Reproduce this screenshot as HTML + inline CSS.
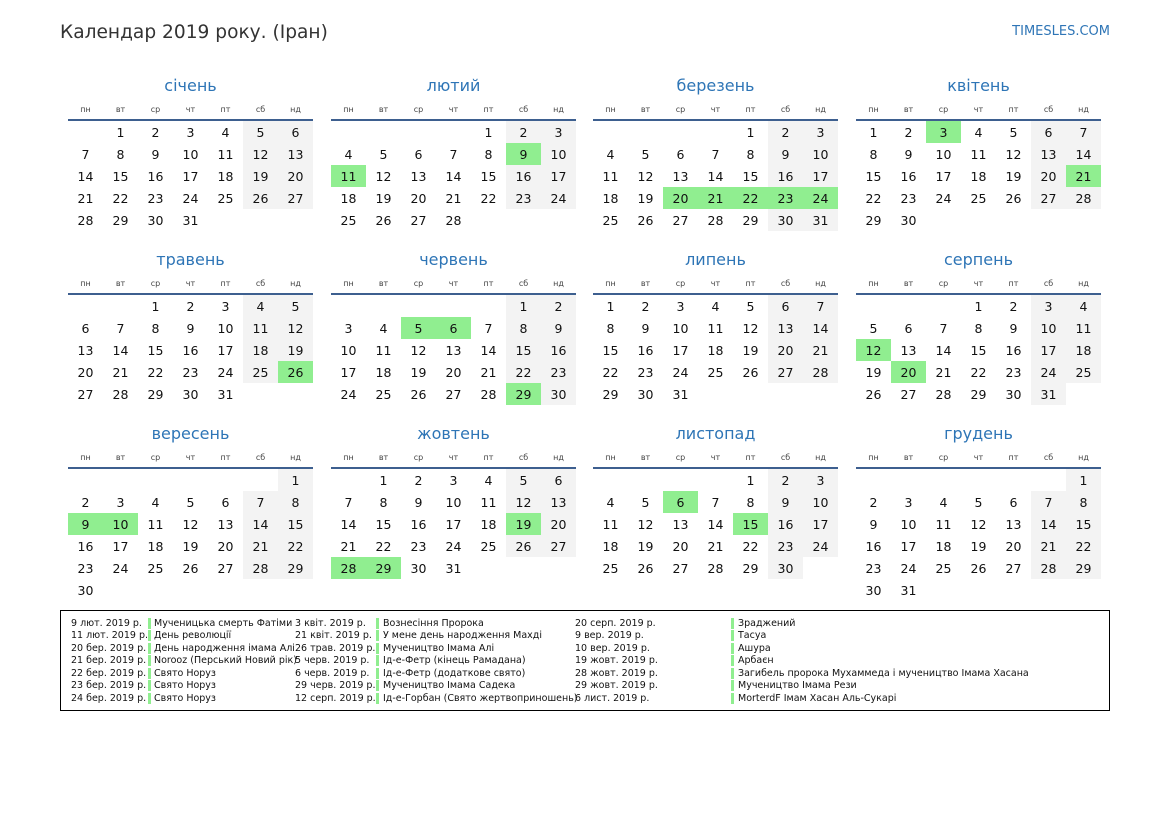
<!DOCTYPE html><html><head><meta charset="utf-8"><style>
body{margin:0;width:1169px;height:827px;background:#fff;font-family:"DejaVu Sans","Liberation Sans",sans-serif;position:relative;overflow:hidden}
.t{position:absolute;left:60px;top:22px;font-size:18.6px;color:#333}
.s{position:absolute;right:59px;top:24px;font-size:13px;color:#2e75b6}
.m{position:absolute;width:245px}
.m h2{margin:0;height:26px;line-height:26px;text-align:center;font-weight:normal;font-size:16px;color:#2e75b6}
table{border-collapse:collapse;width:245px;table-layout:fixed}
th{font-weight:normal;font-size:8px;color:#444;height:20px;border-bottom:2px solid #3d5f8f;padding:0}
td{height:22px;padding:0;text-align:center;font-size:12.5px;color:#111}
td.w{background:#f3f3f3}td.h{background:#90ee90}
.lg{position:absolute;left:60px;top:610px;width:1048px;height:99px;border:1px solid #000}
.c{position:absolute;top:7px;font-size:9.5px;line-height:12.45px;color:#111;white-space:nowrap}
.b{position:absolute;top:7px;width:3px}
.b div{height:11px;margin-bottom:1.45px;background:#90ee90}
</style></head><body>
<div class="t">Календар 2019 року. (Іран)</div><div class="s">TIMESLES.COM</div>

<div class="m" style="left:68px;top:73px"><h2>січень</h2><table><tr><th>пн</th><th>вт</th><th>ср</th><th>чт</th><th>пт</th><th>сб</th><th>нд</th></tr>
<tr><td></td><td>1</td><td>2</td><td>3</td><td>4</td><td class="w">5</td><td class="w">6</td></tr>
<tr><td>7</td><td>8</td><td>9</td><td>10</td><td>11</td><td class="w">12</td><td class="w">13</td></tr>
<tr><td>14</td><td>15</td><td>16</td><td>17</td><td>18</td><td class="w">19</td><td class="w">20</td></tr>
<tr><td>21</td><td>22</td><td>23</td><td>24</td><td>25</td><td class="w">26</td><td class="w">27</td></tr>
<tr><td>28</td><td>29</td><td>30</td><td>31</td><td></td><td></td><td></td></tr></table></div>

<div class="m" style="left:331px;top:73px"><h2>лютий</h2><table><tr><th>пн</th><th>вт</th><th>ср</th><th>чт</th><th>пт</th><th>сб</th><th>нд</th></tr>
<tr><td></td><td></td><td></td><td></td><td>1</td><td class="w">2</td><td class="w">3</td></tr>
<tr><td>4</td><td>5</td><td>6</td><td>7</td><td>8</td><td class="h">9</td><td class="w">10</td></tr>
<tr><td class="h">11</td><td>12</td><td>13</td><td>14</td><td>15</td><td class="w">16</td><td class="w">17</td></tr>
<tr><td>18</td><td>19</td><td>20</td><td>21</td><td>22</td><td class="w">23</td><td class="w">24</td></tr>
<tr><td>25</td><td>26</td><td>27</td><td>28</td><td></td><td></td><td></td></tr></table></div>

<div class="m" style="left:593px;top:73px"><h2>березень</h2><table><tr><th>пн</th><th>вт</th><th>ср</th><th>чт</th><th>пт</th><th>сб</th><th>нд</th></tr>
<tr><td></td><td></td><td></td><td></td><td>1</td><td class="w">2</td><td class="w">3</td></tr>
<tr><td>4</td><td>5</td><td>6</td><td>7</td><td>8</td><td class="w">9</td><td class="w">10</td></tr>
<tr><td>11</td><td>12</td><td>13</td><td>14</td><td>15</td><td class="w">16</td><td class="w">17</td></tr>
<tr><td>18</td><td>19</td><td class="h">20</td><td class="h">21</td><td class="h">22</td><td class="h">23</td><td class="h">24</td></tr>
<tr><td>25</td><td>26</td><td>27</td><td>28</td><td>29</td><td class="w">30</td><td class="w">31</td></tr></table></div>

<div class="m" style="left:856px;top:73px"><h2>квітень</h2><table><tr><th>пн</th><th>вт</th><th>ср</th><th>чт</th><th>пт</th><th>сб</th><th>нд</th></tr>
<tr><td>1</td><td>2</td><td class="h">3</td><td>4</td><td>5</td><td class="w">6</td><td class="w">7</td></tr>
<tr><td>8</td><td>9</td><td>10</td><td>11</td><td>12</td><td class="w">13</td><td class="w">14</td></tr>
<tr><td>15</td><td>16</td><td>17</td><td>18</td><td>19</td><td class="w">20</td><td class="h">21</td></tr>
<tr><td>22</td><td>23</td><td>24</td><td>25</td><td>26</td><td class="w">27</td><td class="w">28</td></tr>
<tr><td>29</td><td>30</td><td></td><td></td><td></td><td></td><td></td></tr></table></div>

<div class="m" style="left:68px;top:247px"><h2>травень</h2><table><tr><th>пн</th><th>вт</th><th>ср</th><th>чт</th><th>пт</th><th>сб</th><th>нд</th></tr>
<tr><td></td><td></td><td>1</td><td>2</td><td>3</td><td class="w">4</td><td class="w">5</td></tr>
<tr><td>6</td><td>7</td><td>8</td><td>9</td><td>10</td><td class="w">11</td><td class="w">12</td></tr>
<tr><td>13</td><td>14</td><td>15</td><td>16</td><td>17</td><td class="w">18</td><td class="w">19</td></tr>
<tr><td>20</td><td>21</td><td>22</td><td>23</td><td>24</td><td class="w">25</td><td class="h">26</td></tr>
<tr><td>27</td><td>28</td><td>29</td><td>30</td><td>31</td><td></td><td></td></tr></table></div>

<div class="m" style="left:331px;top:247px"><h2>червень</h2><table><tr><th>пн</th><th>вт</th><th>ср</th><th>чт</th><th>пт</th><th>сб</th><th>нд</th></tr>
<tr><td></td><td></td><td></td><td></td><td></td><td class="w">1</td><td class="w">2</td></tr>
<tr><td>3</td><td>4</td><td class="h">5</td><td class="h">6</td><td>7</td><td class="w">8</td><td class="w">9</td></tr>
<tr><td>10</td><td>11</td><td>12</td><td>13</td><td>14</td><td class="w">15</td><td class="w">16</td></tr>
<tr><td>17</td><td>18</td><td>19</td><td>20</td><td>21</td><td class="w">22</td><td class="w">23</td></tr>
<tr><td>24</td><td>25</td><td>26</td><td>27</td><td>28</td><td class="h">29</td><td class="w">30</td></tr></table></div>

<div class="m" style="left:593px;top:247px"><h2>липень</h2><table><tr><th>пн</th><th>вт</th><th>ср</th><th>чт</th><th>пт</th><th>сб</th><th>нд</th></tr>
<tr><td>1</td><td>2</td><td>3</td><td>4</td><td>5</td><td class="w">6</td><td class="w">7</td></tr>
<tr><td>8</td><td>9</td><td>10</td><td>11</td><td>12</td><td class="w">13</td><td class="w">14</td></tr>
<tr><td>15</td><td>16</td><td>17</td><td>18</td><td>19</td><td class="w">20</td><td class="w">21</td></tr>
<tr><td>22</td><td>23</td><td>24</td><td>25</td><td>26</td><td class="w">27</td><td class="w">28</td></tr>
<tr><td>29</td><td>30</td><td>31</td><td></td><td></td><td></td><td></td></tr></table></div>

<div class="m" style="left:856px;top:247px"><h2>серпень</h2><table><tr><th>пн</th><th>вт</th><th>ср</th><th>чт</th><th>пт</th><th>сб</th><th>нд</th></tr>
<tr><td></td><td></td><td></td><td>1</td><td>2</td><td class="w">3</td><td class="w">4</td></tr>
<tr><td>5</td><td>6</td><td>7</td><td>8</td><td>9</td><td class="w">10</td><td class="w">11</td></tr>
<tr><td class="h">12</td><td>13</td><td>14</td><td>15</td><td>16</td><td class="w">17</td><td class="w">18</td></tr>
<tr><td>19</td><td class="h">20</td><td>21</td><td>22</td><td>23</td><td class="w">24</td><td class="w">25</td></tr>
<tr><td>26</td><td>27</td><td>28</td><td>29</td><td>30</td><td class="w">31</td><td></td></tr></table></div>

<div class="m" style="left:68px;top:421px"><h2>вересень</h2><table><tr><th>пн</th><th>вт</th><th>ср</th><th>чт</th><th>пт</th><th>сб</th><th>нд</th></tr>
<tr><td></td><td></td><td></td><td></td><td></td><td></td><td class="w">1</td></tr>
<tr><td>2</td><td>3</td><td>4</td><td>5</td><td>6</td><td class="w">7</td><td class="w">8</td></tr>
<tr><td class="h">9</td><td class="h">10</td><td>11</td><td>12</td><td>13</td><td class="w">14</td><td class="w">15</td></tr>
<tr><td>16</td><td>17</td><td>18</td><td>19</td><td>20</td><td class="w">21</td><td class="w">22</td></tr>
<tr><td>23</td><td>24</td><td>25</td><td>26</td><td>27</td><td class="w">28</td><td class="w">29</td></tr>
<tr><td>30</td><td></td><td></td><td></td><td></td><td></td><td></td></tr></table></div>

<div class="m" style="left:331px;top:421px"><h2>жовтень</h2><table><tr><th>пн</th><th>вт</th><th>ср</th><th>чт</th><th>пт</th><th>сб</th><th>нд</th></tr>
<tr><td></td><td>1</td><td>2</td><td>3</td><td>4</td><td class="w">5</td><td class="w">6</td></tr>
<tr><td>7</td><td>8</td><td>9</td><td>10</td><td>11</td><td class="w">12</td><td class="w">13</td></tr>
<tr><td>14</td><td>15</td><td>16</td><td>17</td><td>18</td><td class="h">19</td><td class="w">20</td></tr>
<tr><td>21</td><td>22</td><td>23</td><td>24</td><td>25</td><td class="w">26</td><td class="w">27</td></tr>
<tr><td class="h">28</td><td class="h">29</td><td>30</td><td>31</td><td></td><td></td><td></td></tr></table></div>

<div class="m" style="left:593px;top:421px"><h2>листопад</h2><table><tr><th>пн</th><th>вт</th><th>ср</th><th>чт</th><th>пт</th><th>сб</th><th>нд</th></tr>
<tr><td></td><td></td><td></td><td></td><td>1</td><td class="w">2</td><td class="w">3</td></tr>
<tr><td>4</td><td>5</td><td class="h">6</td><td>7</td><td>8</td><td class="w">9</td><td class="w">10</td></tr>
<tr><td>11</td><td>12</td><td>13</td><td>14</td><td class="h">15</td><td class="w">16</td><td class="w">17</td></tr>
<tr><td>18</td><td>19</td><td>20</td><td>21</td><td>22</td><td class="w">23</td><td class="w">24</td></tr>
<tr><td>25</td><td>26</td><td>27</td><td>28</td><td>29</td><td class="w">30</td><td></td></tr></table></div>

<div class="m" style="left:856px;top:421px"><h2>грудень</h2><table><tr><th>пн</th><th>вт</th><th>ср</th><th>чт</th><th>пт</th><th>сб</th><th>нд</th></tr>
<tr><td></td><td></td><td></td><td></td><td></td><td></td><td class="w">1</td></tr>
<tr><td>2</td><td>3</td><td>4</td><td>5</td><td>6</td><td class="w">7</td><td class="w">8</td></tr>
<tr><td>9</td><td>10</td><td>11</td><td>12</td><td>13</td><td class="w">14</td><td class="w">15</td></tr>
<tr><td>16</td><td>17</td><td>18</td><td>19</td><td>20</td><td class="w">21</td><td class="w">22</td></tr>
<tr><td>23</td><td>24</td><td>25</td><td>26</td><td>27</td><td class="w">28</td><td class="w">29</td></tr>
<tr><td>30</td><td>31</td><td></td><td></td><td></td><td></td><td></td></tr></table></div>

<div class="lg">
<div class="c" style="left:10px">9 лют. 2019 р.<br>11 лют. 2019 р.<br>20 бер. 2019 р.<br>21 бер. 2019 р.<br>22 бер. 2019 р.<br>23 бер. 2019 р.<br>24 бер. 2019 р.</div>
<div class="b" style="left:87px"><div></div><div></div><div></div><div></div><div></div><div></div><div></div></div>
<div class="c" style="left:93px">Мученицька смерть Фатіми<br>День революції<br>День народження імама Алі<br>Norooz (Перський Новий рік)<br>Свято Норуз<br>Свято Норуз<br>Свято Норуз</div>
<div class="c" style="left:234px">3 квіт. 2019 р.<br>21 квіт. 2019 р.<br>26 трав. 2019 р.<br>5 черв. 2019 р.<br>6 черв. 2019 р.<br>29 черв. 2019 р.<br>12 серп. 2019 р.</div>
<div class="b" style="left:315px"><div></div><div></div><div></div><div></div><div></div><div></div><div></div></div>
<div class="c" style="left:322px">Вознесіння Пророка<br>У мене день народження Махді<br>Мучеництво Імама Алі<br>Ід-е-Фетр (кінець Рамадана)<br>Ід-е-Фетр (додаткове свято)<br>Мучеництво Імама Садека<br>Ід-е-Горбан (Свято жертвоприношень)</div>
<div class="c" style="left:514px">20 серп. 2019 р.<br>9 вер. 2019 р.<br>10 вер. 2019 р.<br>19 жовт. 2019 р.<br>28 жовт. 2019 р.<br>29 жовт. 2019 р.<br>6 лист. 2019 р.</div>
<div class="b" style="left:670px"><div></div><div></div><div></div><div></div><div></div><div></div><div></div></div>
<div class="c" style="left:677px">Зраджений<br>Тасуа<br>Ашура<br>Арбаєн<br>Загибель пророка Мухаммеда і мучеництво Імама Хасана<br>Мучеництво Імама Рези<br>MorterdF Імам Хасан Аль-Сукарі</div>
</div>
</body></html>
